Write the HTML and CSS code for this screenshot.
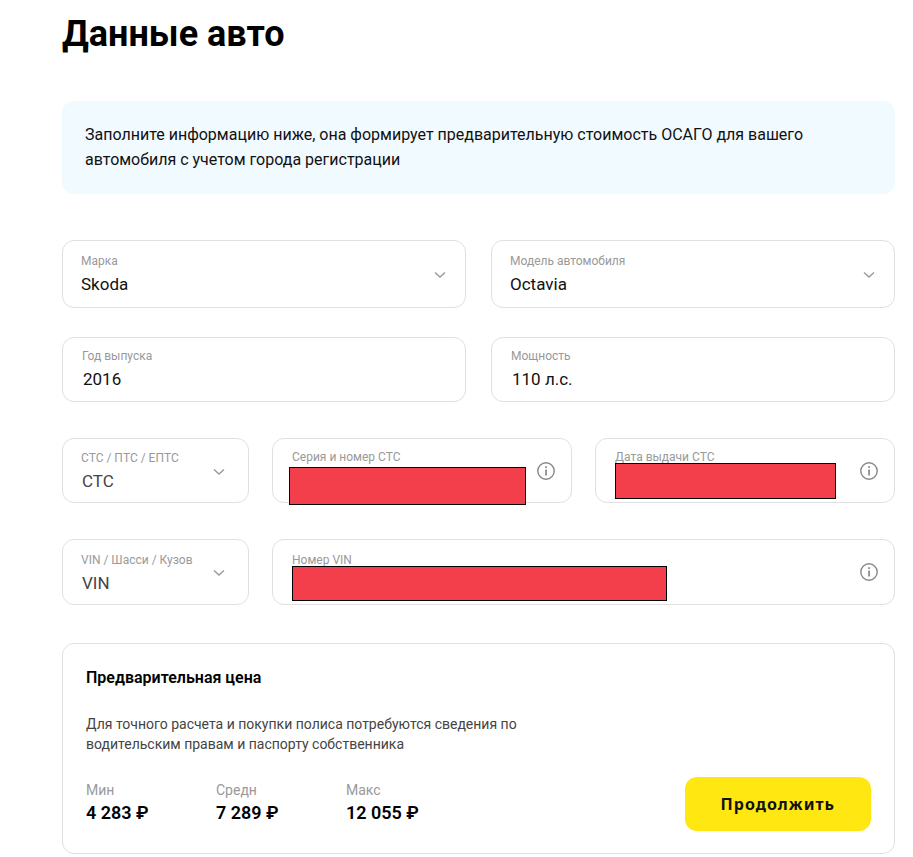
FILE: index.html
```
<!DOCTYPE html>
<html lang="ru">
  <head>
    <meta charset="utf-8" />
    <meta name="viewport" content="width=device-width, initial-scale=1" />
    <title>Данные авто</title>
    <link rel="stylesheet" href="styles.css" />
  </head>
  <body>
    <svg width="0" height="0" class="sprite" aria-hidden="true">
      <symbol id="chevron" viewBox="0 0 12 8">
        <path d="M1 1.5l5 4.6 5-4.6" fill="none" stroke="currentColor" stroke-width="1.4" />
      </symbol>
      <symbol id="info" viewBox="0 0 18 18">
        <circle cx="9" cy="9" r="8.2" fill="none" stroke="currentColor" stroke-width="1.4" />
        <path d="M8.2 7.6h1.7v6H8.2zM8.2 4.2h1.7v1.9H8.2z" fill="currentColor" />
      </symbol>
    </svg>

    <main class="page">
      <h1>Данные авто</h1>

      <p class="notice">
        Заполните информацию ниже, она формирует предварительную стоимость ОСАГО
        для вашего автомобиля с учетом города регистрации
      </p>

      <form>
        <div class="row row-half row-model">
          <div class="field field-tall">
            <div class="field-body">
              <label for="brand">Марка</label>
              <select id="brand">
                <option>Skoda</option>
              </select>
            </div>
            <svg class="chevron"><use href="#chevron" /></svg>
          </div>
          <div class="field field-tall">
            <div class="field-body">
              <label for="model">Модель автомобиля</label>
              <select id="model">
                <option>Octavia</option>
              </select>
            </div>
            <svg class="chevron"><use href="#chevron" /></svg>
          </div>
        </div>

        <div class="row row-half">
          <div class="field field-text">
            <div class="field-body">
              <label for="year">Год выпуска</label>
              <input id="year" type="text" value="2016" />
            </div>
          </div>
          <div class="field field-text">
            <div class="field-body">
              <label for="power">Мощность</label>
              <input id="power" type="text" value="110 л.с." />
            </div>
          </div>
        </div>

        <div class="row row-doc">
          <div class="field field-type">
            <div class="field-body">
              <label for="docType">СТС / ПТС / ЕПТС</label>
              <select id="docType">
                <option>СТС</option>
              </select>
            </div>
            <svg class="chevron"><use href="#chevron" /></svg>
          </div>
          <div class="field field-text">
            <div class="field-body">
              <label for="docNumber">Серия и номер СТС</label>
              <input id="docNumber" type="text" />
            </div>
            <svg class="info"><use href="#info" /></svg>
            <div class="mask mask-number"></div>
          </div>
          <div class="field field-text">
            <div class="field-body">
              <label for="docDate">Дата выдачи СТС</label>
              <input id="docDate" type="text" />
            </div>
            <svg class="info"><use href="#info" /></svg>
            <div class="mask mask-date"></div>
          </div>
        </div>

        <div class="row row-vin">
          <div class="field field-type">
            <div class="field-body">
              <label for="vinType">VIN / Шасси / Кузов</label>
              <select id="vinType">
                <option>VIN</option>
              </select>
            </div>
            <svg class="chevron"><use href="#chevron" /></svg>
          </div>
          <div class="field field-text">
            <div class="field-body">
              <label for="vin">Номер VIN</label>
              <input id="vin" type="text" />
            </div>
            <svg class="info"><use href="#info" /></svg>
            <div class="mask mask-vin"></div>
          </div>
        </div>

        <section class="price">
          <h2>Предварительная цена</h2>
          <p class="price-text">
            Для точного расчета и покупки полиса потребуются сведения по
            водительским правам и паспорту собственника
          </p>
          <div class="price-bottom">
            <dl class="price-list">
              <div>
                <dt>Мин</dt>
                <dd>4 283 ₽</dd>
              </div>
              <div>
                <dt>Средн</dt>
                <dd>7 289 ₽</dd>
              </div>
              <div>
                <dt>Макс</dt>
                <dd>12 055 ₽</dd>
              </div>
            </dl>
            <button type="submit" class="btn">Продолжить</button>
          </div>
        </section>
      </form>
    </main>
  </body>
</html>
```

FILE: styles.css
```
* {
  box-sizing: border-box;
}

body {
  margin: 0;
  background: #fff;
  color: #111;
  font-family: Roboto, "Liberation Sans", sans-serif;
  font-size: 16px;
}

.sprite {
  position: absolute;
}

.page {
  padding: 12px 18px 3px 62px;
}

h1 {
  margin: 0 0 45px;
  color: #000;
  font-size: 36px;
  line-height: 44px;
  font-weight: 700;
}

.notice {
  margin: 0 0 46px;
  padding: 21px 80px 22px 23px;
  border-radius: 12px;
  background: #f1faff;
  line-height: 25px;
}

/* Form rows */
.row {
  display: grid;
  column-gap: 23px;
  margin-bottom: 36px;
}

.row-half {
  grid-template-columns: 1fr 1fr;
  column-gap: 25px;
}

.row-model {
  margin-bottom: 29px;
}

.row-doc {
  grid-template-columns: 187px 1fr 1fr;
}

.row-vin {
  grid-template-columns: 187px 1fr;
  margin-bottom: 38px;
}

/* Fields */
.field {
  position: relative;
  display: flex;
  align-items: center;
  padding: 0 16px 0 18px;
  border: 1px solid #e0e0e0;
  border-radius: 12px;
}

.field-body {
  flex: 1;
  min-width: 0;
  padding: 11px 0 9px;
}

.field-tall .field-body {
  padding: 12px 0 11px;
}

.field-text {
  padding-left: 19px;
}

.field-text .field-body {
  padding: 10px 0;
}

.field-type {
  padding-right: 20px;
}

.row-vin .field-body {
  padding: 12px 0 9px;
}

.field label {
  display: block;
  margin-bottom: 3px;
  color: #999;
  font-size: 12px;
  line-height: 16px;
  white-space: nowrap;
}

.field select,
.field input {
  display: block;
  width: 100%;
  height: 24px;
  margin: 0;
  padding: 0;
  border: 0;
  outline: 0;
  appearance: none;
  background: transparent;
  color: #111;
  font: inherit;
  font-size: 17px;
  line-height: 24px;
}

.field-text input {
  padding-left: 1px;
}

.field-type select {
  padding-left: 1px;
  color: #444;
}

.chevron {
  flex: none;
  width: 12px;
  height: 8px;
  margin: 2px 3px 0 0;
  color: #999;
  pointer-events: none;
}

.info {
  flex: none;
  width: 18px;
  height: 18px;
  color: #888;
}

/* Bars that hide personal data */
.mask {
  position: absolute;
  border: 1px solid #000;
  background: #f33e4b;
}

.mask-number {
  top: 28px;
  left: 16px;
  right: 45px;
  height: 38px;
}

.mask-date {
  top: 24px;
  left: 19px;
  right: 58px;
  height: 36px;
}

.mask-vin {
  top: 26px;
  left: 19px;
  width: 375px;
  height: 35px;
}

/* Price card */
.price {
  padding: 22px 23px;
  border: 1px solid #e0e0e0;
  border-radius: 12px;
}

h2 {
  margin: 0 0 24px;
  color: #000;
  font-size: 16px;
  line-height: 24px;
  font-weight: 600;
}

.price-text {
  max-width: 440px;
  margin: 0 0 23px;
  color: #444;
  font-size: 14px;
  line-height: 20px;
}

.price-bottom {
  display: flex;
  justify-content: space-between;
  align-items: flex-start;
}

.price-list {
  display: grid;
  grid-template-columns: repeat(3, 130px);
  margin: 0;
  padding-top: 3px;
}

.price-list dt {
  color: #999;
  font-size: 14px;
  line-height: 20px;
}

.price-list dd {
  margin: 0;
  color: #000;
  font-size: 18px;
  line-height: 26px;
  font-weight: 600;
}

.btn {
  height: 54px;
  padding: 0 36px;
  border: 0;
  border-radius: 12px;
  background: #ffe812;
  color: #111;
  font-family: "Noto Sans", sans-serif;
  font-size: 16px;
  font-weight: 700;
  letter-spacing: 1px;
  cursor: pointer;
}
```
